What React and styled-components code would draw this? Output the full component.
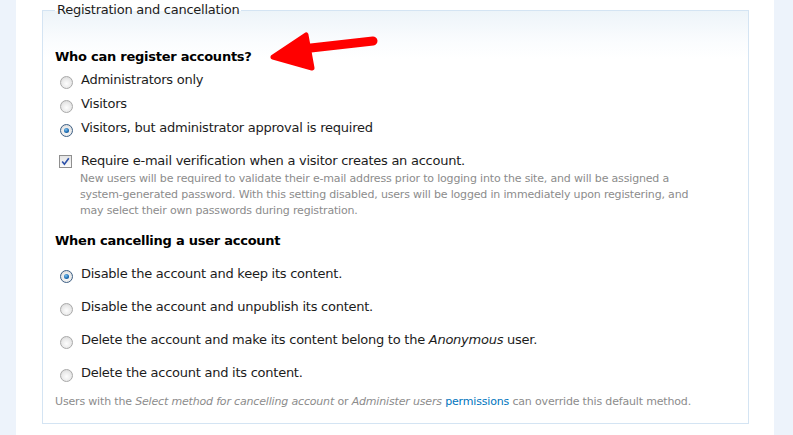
import React from 'react'
import styled, { createGlobalStyle } from 'styled-components'

const GlobalStyle = createGlobalStyle`
  html, body {
    margin: 0;
    padding: 0;
    background: #fff;
  }
  body {
    font-family: "DejaVu Sans", Verdana, sans-serif;
    font-size: 13px;
    letter-spacing: -0.25px;
    color: #1a1a1a;
  }
`

const Page = styled.div`
  display: flex;
  width: 793px;
  height: 435px;
  overflow: hidden;
`

const Rail = styled.div`
  flex: 0 0 ${(p) => p.$w}px;
  background: #edf3fb;
`

const Main = styled.div`
  flex: 1;
  padding: 0 25px 0 26px;
  position: relative;
`

const Fieldset = styled.fieldset`
  margin: 2px 0 0;
  padding: 31px 12px 0;
  height: 422px;
  box-sizing: border-box;
  border: 1px solid #d4e4f3;
  background: linear-gradient(#edf4f9 0, #fafcfe 30px, #fff 48px);
`

const Legend = styled.legend`
  padding: 0 2px;
  line-height: 16px;
  color: #1c1c1c;
`

const Heading = styled.div`
  font-weight: bold;
  line-height: 16px;
  color: #000;
  margin-bottom: ${(p) => p.$mb}px;
`

const Options = styled.div`
  display: flex;
  flex-direction: column;
  gap: ${(p) => p.$gap}px;
`

const Row = styled.label`
  display: flex;
  align-items: flex-start;
  height: 16px;
  gap: 8px;
  line-height: 16px;
  padding-left: 5px;
  color: #1c1c1c;
`

const Radio = styled.span`
  flex: 0 0 auto;
  width: 11px;
  height: 11px;
  margin-top: 4px;
  border-radius: 50%;
  border: 1px solid ${(p) => (p.$on ? '#3d5f85' : '#a9a9a9')};
  background: radial-gradient(circle at 50% 60%, #fdfdfd 0, #e9e9e9 55%, #cfcfcf 100%);
  position: relative;
  &::after {
    content: '';
    display: ${(p) => (p.$on ? 'block' : 'none')};
    position: absolute;
    left: 3px;
    top: 3px;
    width: 5px;
    height: 5px;
    border-radius: 50%;
    background: radial-gradient(circle at 40% 35%, #7cc2f0 0, #1f6fb5 55%, #0d3f73 100%);
  }
`

const Box = styled.span`
  flex: 0 0 auto;
  width: 11px;
  height: 11px;
  margin-top: 2px;
  border: 1px solid #8f8f8f;
  background: linear-gradient(#e4e4e4, #fafafa);
  display: flex;
  align-items: center;
  justify-content: center;
`

const CheckItem = styled.div`
  margin-top: 17px;
  padding-left: 4px;
`

const CheckRow = styled(Row)`
  padding-left: 0;
  gap: 9px;
`

const Small = styled.div`
  font-size: 11px;
  line-height: 16px;
  letter-spacing: -0.17px;
  color: #8c8c8c;
`

const Description = styled(Small)`
  margin: 2px 0 0 21px;
  max-width: 622px;
`

const Help = styled(Small)`
  margin-top: 13px;
`

const Link = styled.a`
  color: #0074bd;
  text-decoration: none;
`

const Arrow = styled.svg`
  position: absolute;
  left: 244px;
  top: 28px;
`

const Section = styled.div`
  margin-top: ${(p) => p.$mt}px;
`

const registerOptions = [
  { label: 'Administrators only' },
  { label: 'Visitors' },
  { label: 'Visitors, but administrator approval is required', on: true },
]

const cancelOptions = [
  { label: 'Disable the account and keep its content.', on: true },
  { label: 'Disable the account and unpublish its content.' },
  {
    label: (
      <span>
        Delete the account and make its content belong to the <em>Anonymous</em> user.
      </span>
    ),
  },
  { label: 'Delete the account and its content.' },
]

const App = () => (
  <>
    <GlobalStyle />
    <Page>
      <Rail $w={16} />
      <Main>
        <Fieldset>
          <Legend>Registration and cancellation</Legend>
          <Heading $mb={7}>Who can register accounts?</Heading>
          <Options $gap={8}>
            {registerOptions.map((o, i) => (
              <Row key={i}>
                <Radio $on={o.on} />
                {o.label}
              </Row>
            ))}
          </Options>
          <CheckItem>
            <CheckRow>
              <Box>
                <svg width="9" height="9" viewBox="0 0 9 9">
                  <path d="M1.2 4.6 L3.4 7.2 L7.8 1.2" fill="none" stroke="#2b4fa8" strokeWidth="1.6" />
                </svg>
              </Box>
              Require e-mail verification when a visitor creates an account.
            </CheckRow>
            <Description>
              New users will be required to validate their e-mail address prior to logging into the site, and will be
              assigned a system-generated password. With this setting disabled, users will be logged in immediately upon
              registering, and may select their own passwords during registration.
            </Description>
          </CheckItem>
          <Section $mt={14}>
            <Heading $mb={17}>When cancelling a user account</Heading>
            <Options $gap={17}>
              {cancelOptions.map((o, i) => (
                <Row key={i}>
                  <Radio $on={o.on} />
                  {o.label}
                </Row>
              ))}
            </Options>
          </Section>
          <Help>
            Users with the <em>Select method for cancelling account</em> or <em>Administer users</em>{' '}
            <Link href="#">permissions</Link> can override this default method.
          </Help>
        </Fieldset>
        <Arrow width="124" height="50" viewBox="0 0 124 50">
          <path d="M42 21 L113 13" stroke="#ff0000" strokeWidth="9" strokeLinecap="round" fill="none" />
          <path d="M13 29 L46 7 L52 40 Z" fill="#ff0000" stroke="#ff0000" strokeWidth="5" strokeLinejoin="round" />
        </Arrow>
      </Main>
      <Rail $w={19} />
    </Page>
  </>
)

export default App
